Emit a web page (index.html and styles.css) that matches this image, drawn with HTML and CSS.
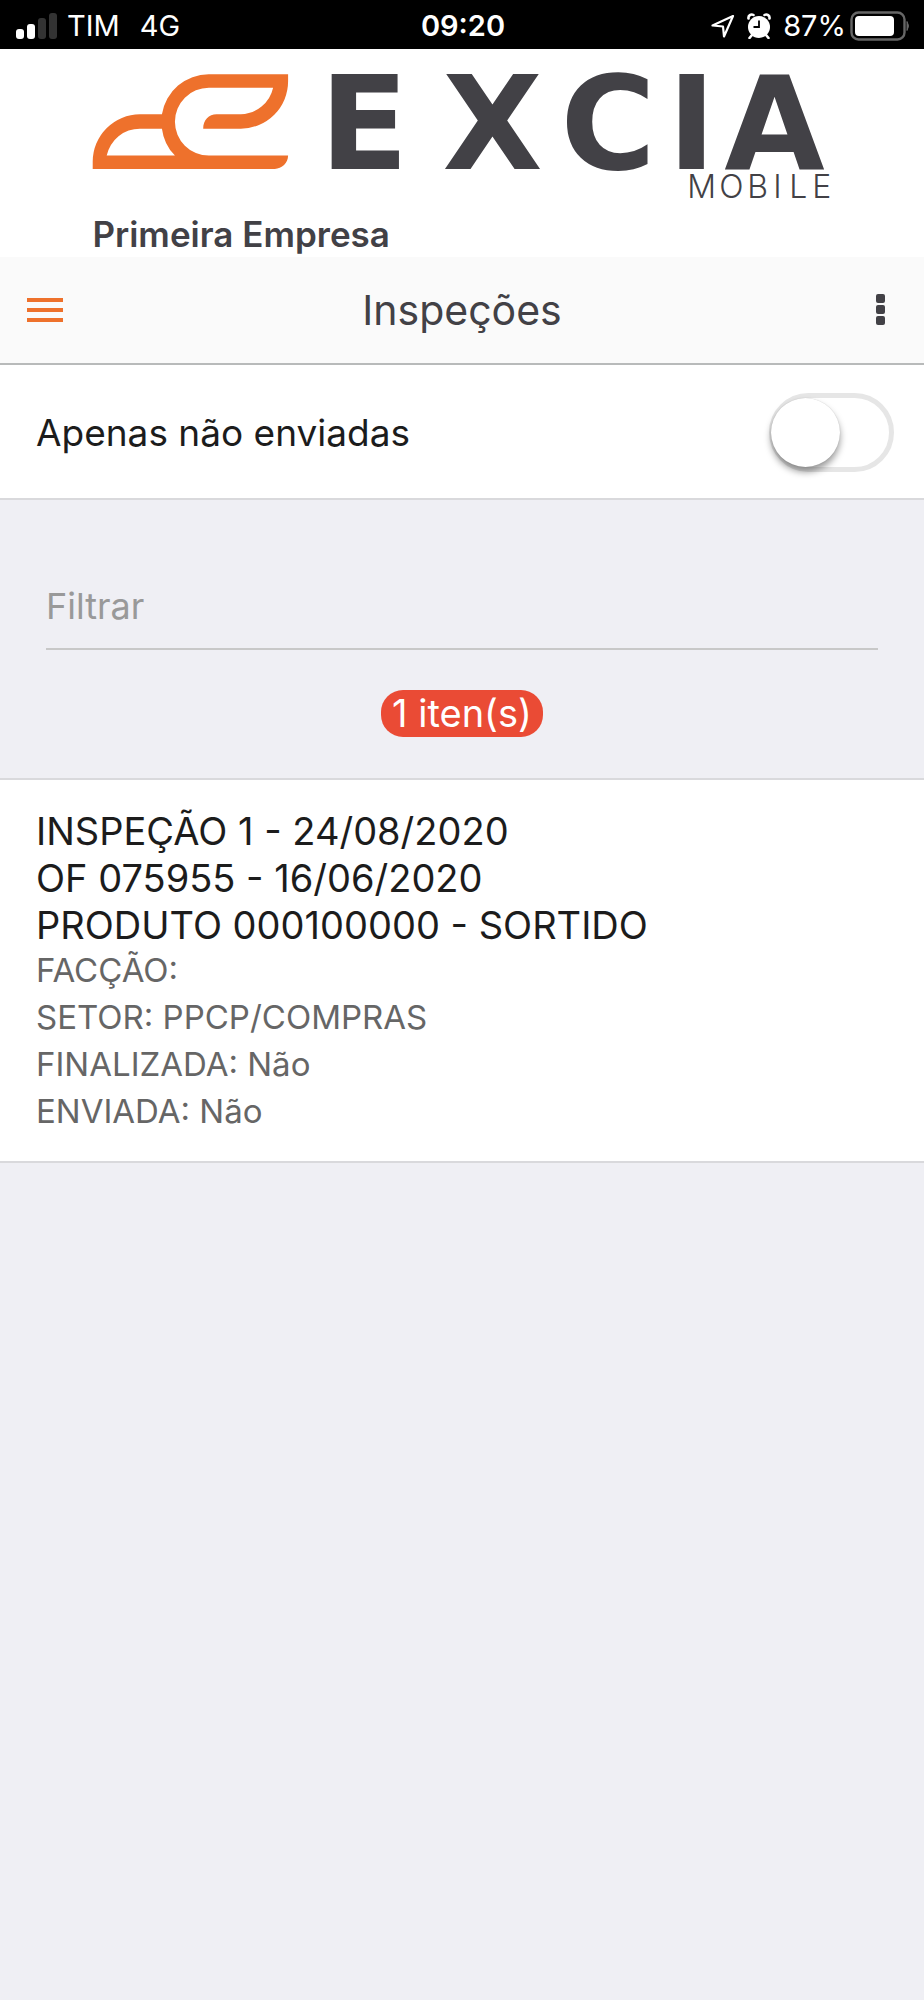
FILE: index.html
```html
<!DOCTYPE html>
<html lang="pt-BR">
<head>
  <meta charset="utf-8">
  <meta name="viewport" content="width=device-width, initial-scale=1">
  <title>Inspeções</title>
  <link rel="stylesheet" href="styles.css">
</head>
<body>
  <div class="status-bar">
    <div class="status-left">
      <svg class="signal" width="42" height="28" viewBox="0 0 42 28" aria-hidden="true">
        <rect x="0" y="17" width="8" height="10" rx="3" fill="#fff"/>
        <rect x="11" y="12" width="8" height="15" rx="3" fill="#fff"/>
        <rect x="22" y="6" width="8" height="21" rx="3" fill="#333"/>
        <rect x="33" y="1" width="8" height="26" rx="3" fill="#333"/>
      </svg>
      <span class="carrier">TIM</span>
      <span>4G</span>
    </div>
    <time class="clock">09:20</time>
    <div class="status-right">
      <svg width="24" height="24" viewBox="0 0 24 24" aria-hidden="true">
        <path d="M22 2 1.500 11.500 12 12.500 13 22.500Z" fill="none" stroke="#fff" stroke-width="2.200" stroke-linejoin="round"/>
      </svg>
      <svg class="alarm" width="24" height="26" viewBox="0 0 24 26" aria-hidden="true">
        <circle cx="12" cy="14" r="11" fill="#fff"/>
        <path d="M1.500 5.500C1 2.500 4 .5 6.500 2M22.500 5.500C23 2.500 20 .5 17.500 2" fill="none" stroke="#fff" stroke-width="2.600" stroke-linecap="round"/>
        <path d="m5 22-2.500 3M19 22l2.500 3" stroke="#fff" stroke-width="2.600" stroke-linecap="round"/>
        <path d="M12 7.500V14H6.500" fill="none" stroke="#000" stroke-width="1.800"/>
      </svg>
      <span>87%</span>
      <svg class="battery" width="60" height="30" viewBox="0 0 60 30" aria-hidden="true">
        <rect x="1.500" y="1.500" width="53" height="27" rx="7" fill="none" stroke="#666" stroke-width="2.400"/>
        <rect x="5" y="5" width="39" height="20" rx="4" fill="#fff"/>
        <path d="M57 10.500q3 4.500 0 9Z" fill="#666" stroke="#666"/>
      </svg>
    </div>
  </div>

  <header class="brand">
    <svg class="logo" viewBox="0 0 740 130" role="img" aria-label="Excia Mobile">
      <path fill="#ee712c" fill-rule="evenodd" d="M.7 97V89.700A47.400 47.400 0 0 1 48 42.300H70A47.400 47.400 0 0 1 117 2.300H196.300V9.300A47.400 47.400 0 0 1 149 56.700H111.300C111.300 48 117 42.300 124.700 42.300H149A34 34 0 0 0 181.300 15.700H117A34 34 0 0 0 117 83.700H196.300C196.300 91 190 97 183 97ZM14.700 83.700H83A47.400 47.400 0 0 1 70 56.700H48A34 34 0 0 0 14.700 83.700Z"/>
      <text class="logo-name" x="228 351 469 576 633" y="97">EXCIA</text>
      <text class="logo-sub" x="596 628 656 682 698 721" y="126">MOBILE</text>
    </svg>
    <p class="company">Primeira Empresa</p>
  </header>

  <nav class="toolbar">
    <button class="icon-button" type="button" aria-label="Menu">
      <svg width="36" height="24" viewBox="0 0 36 24"><path d="M0 2H36M0 12H36M0 22H36" stroke="#ee712c" stroke-width="4"/></svg>
    </button>
    <h1 class="title">Inspeções</h1>
    <button class="icon-button icon-button-end" type="button" aria-label="Mais opções">
      <svg width="10" height="31" viewBox="0 0 10 31" fill="#424146"><rect x="0" y="0" width="9" height="9" rx="2"/><rect x="0" y="11" width="9" height="9" rx="2"/><rect x="0" y="22" width="9" height="9" rx="2"/></svg>
    </button>
  </nav>

  <main>
    <div class="toggle-row">
      <label for="unsent">Apenas não enviadas</label>
      <input class="switch" type="checkbox" role="switch" id="unsent">
    </div>

    <div class="filter">
      <input class="filter-input" type="text" placeholder="Filtrar" aria-label="Filtrar">
      <span class="badge">1 iten(s)</span>
    </div>

    <article class="item">
      <h2 class="item-line">INSPEÇÃO 1 - 24/08/2020</h2>
      <h2 class="item-line">OF 075955 - 16/06/2020</h2>
      <h2 class="item-line">PRODUTO 000100000 - SORTIDO</h2>
      <div class="item-details">
        <p>FACÇÃO:</p>
        <p>SETOR: PPCP/COMPRAS</p>
        <p>FINALIZADA: Não</p>
        <p>ENVIADA: Não</p>
      </div>
    </article>
  </main>
</body>
</html>
```
FILE: styles.css
```css
* {
  box-sizing: border-box;
}

body {
  margin: 0;
  min-height: 100vh;
  background: #efeff4;
  color: #1c1c1c;
  font-family: Inter, "Liberation Sans", sans-serif;
  font-size: 37px;
}

h1, h2, p {
  margin: 0;
  font-weight: 400;
}

.status-bar {
  display: grid;
  grid-template-columns: 1fr auto 1fr;
  align-items: center;
  height: 49px;
  padding: 2px 14px 0 16px;
  background: #000;
  color: #fff;
  font-size: 29px;
}

.status-left,
.status-right {
  display: flex;
  align-items: center;
}

.signal {
  margin-right: 9px;
}

.carrier {
  margin-right: 20px;
}

.clock {
  font-weight: 600;
}

.status-right {
  justify-content: flex-end;
}

.alarm {
  margin: 0 12px;
}

.battery {
  margin-left: 4px;
}

.brand {
  padding: 23px 10% 0;
  background: #fff;
}

.logo {
  display: block;
  width: 100%;
  overflow: visible;
}

.logo-name {
  fill: #424146;
  font-family: "DejaVu Sans", sans-serif;
  font-size: 130px;
  font-weight: 700;
}

.logo-sub {
  fill: #424146;
  font-size: 32px;
  font-weight: 300;
}

.company {
  padding: 12px 0 3px;
  color: #424146;
  font-size: 35px;
  font-weight: 600;
  line-height: 40px;
}

.toolbar {
  display: grid;
  grid-template-columns: 1fr auto 1fr;
  align-items: center;
  height: 108px;
  padding: 0 27px;
  border-bottom: 2px solid #b8baba;
  background: #fafafa;
}

.icon-button {
  display: flex;
  justify-self: start;
  padding: 0;
  border: 0;
  background: none;
}

.icon-button-end {
  justify-self: end;
  margin-right: 11px;
}

.title {
  color: #424146;
  font-size: 41px;
}

.toggle-row {
  display: flex;
  align-items: center;
  justify-content: space-between;
  height: 135px;
  padding: 3px 30px 0 36px;
  border-bottom: 2px solid #d9d9dc;
  background: #fff;
}

.switch {
  position: relative;
  width: 125px;
  height: 79px;
  margin: 0;
  border: 5px solid #e6e6e6;
  border-radius: 40px;
  background: #fff;
  appearance: none;
}

.switch::before {
  content: "";
  position: absolute;
  top: 0;
  left: -3px;
  width: 69px;
  height: 69px;
  border-radius: 50%;
  background: #fff;
  box-shadow: 0 5px 7px rgba(0, 0, 0, .4), 0 0 1px rgba(0, 0, 0, .2);
}

.switch:checked::before {
  left: 49px;
}

.filter {
  display: flex;
  flex-direction: column;
  align-items: center;
  padding: 65px 46px 41px;
}

.filter-input {
  width: 100%;
  height: 85px;
  padding: 0;
  border: 0;
  border-bottom: 2px solid #c8c8c8;
  border-radius: 0;
  background: none;
  color: inherit;
  font: inherit;
  font-size: 36px;
}

.filter-input::placeholder {
  color: #999;
  opacity: 1;
}

.badge {
  margin-top: 40px;
  padding: 0 11px;
  border-radius: 22px;
  background: #ea4b35;
  color: #fff;
  font-size: 38px;
  line-height: 47px;
}

.item {
  padding: 28px 36px 26px;
  border-top: 2px solid #d9d9dc;
  border-bottom: 2px solid #d9d9dc;
  background: #fff;
  line-height: 47px;
}

.item-line {
  font-size: 38px;
}

.item-details {
  margin-top: -2px;
  color: #666;
  font-size: 33px;
}
```
